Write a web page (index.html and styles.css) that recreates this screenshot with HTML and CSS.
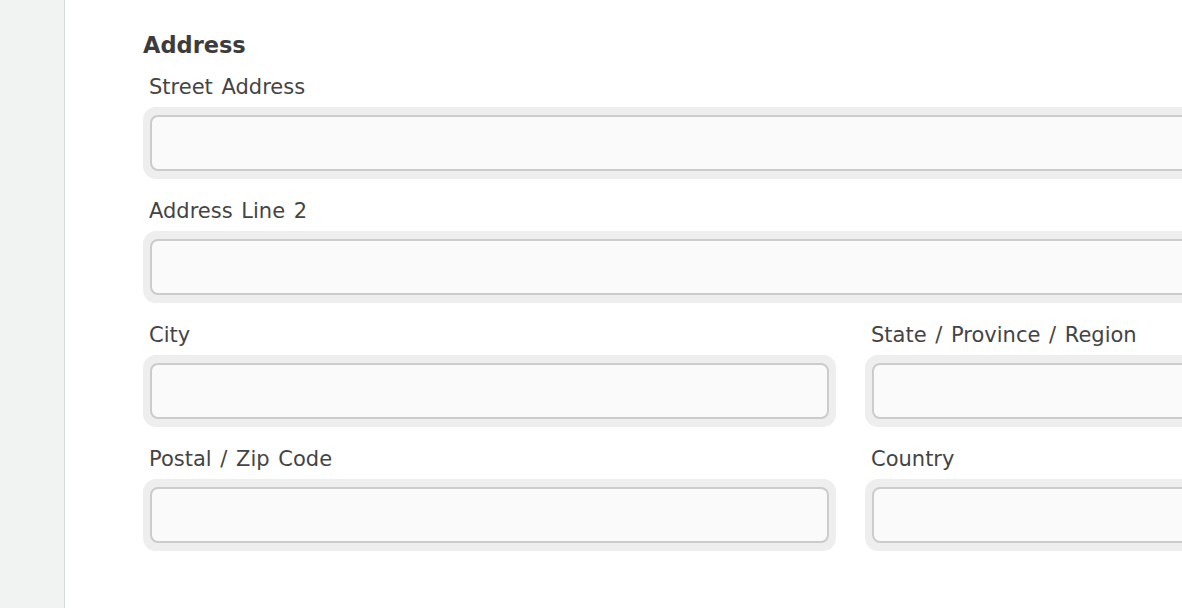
FILE: index.html
```html
<!DOCTYPE html>
<html lang="en">
<head>
<meta charset="utf-8">
<title>Address</title>
<link rel="stylesheet" href="styles.css">
</head>
<body>
<div class="page">
  <aside class="sidebar"></aside>
  <main class="content">
    <form class="form">
      <h2 class="section-title">Address</h2>
      <div class="field full">
        <label class="label">Street Address</label>
        <div class="well"><input class="input" type="text"></div>
      </div>
      <div class="field full">
        <label class="label">Address Line 2</label>
        <div class="well"><input class="input" type="text"></div>
      </div>
      <div class="field">
        <label class="label">City</label>
        <div class="well"><input class="input" type="text"></div>
      </div>
      <div class="field">
        <label class="label">State / Province / Region</label>
        <div class="well"><input class="input" type="text"></div>
      </div>
      <div class="field">
        <label class="label">Postal / Zip Code</label>
        <div class="well"><input class="input" type="text"></div>
      </div>
      <div class="field">
        <label class="label">Country</label>
        <div class="well"><input class="input" type="text"></div>
      </div>
    </form>
  </main>
</div>
</body>
</html>
```

FILE: styles.css
```css
html, body {
  margin: 0;
  padding: 0;
  background: #ffffff;
  overflow: hidden;
}
body {
  width: 1182px;
  height: 608px;
  font-family: "DejaVu Sans", "Open Sans", sans-serif;
  color: #444444;
}
.page {
  display: flex;
  height: 608px;
}
.sidebar {
  flex: 0 0 64px;
  background: #f1f3f2;
  border-right: 1px solid #d6dad9;
}
.content {
  flex: 1 1 auto;
  padding-left: 78px;
  overflow: hidden;
}
.form {
  width: 1415px;
  display: grid;
  grid-template-columns: 693px 693px;
  column-gap: 29px;
  row-gap: 17px;
  padding-top: 30px;
}
.section-title {
  grid-column: 1 / -1;
  margin: 0 0 -5px 0;
  font-size: 22.5px;
  line-height: 30px;
  font-weight: 700;
  color: #3c3c3c;
}
.field {
  display: flex;
  flex-direction: column;
}
.field.full {
  grid-column: 1 / -1;
}
.label {
  padding: 1px 0 0 6px;
  font-size: 21px;
  line-height: 28px;
  word-spacing: 2px;
  margin-bottom: 6px;
  color: #444444;
}
.well {
  background: #eeeeee;
  border-radius: 13px;
  padding: 8px 7px;
}
.input {
  display: block;
  box-sizing: border-box;
  width: 100%;
  height: 56px;
  margin: 0;
  border: 2px solid #cccccc;
  border-radius: 8px;
  background: #fafafa;
  font-family: inherit;
  font-size: 18px;
  padding: 0 12px;
  outline: none;
}
```
